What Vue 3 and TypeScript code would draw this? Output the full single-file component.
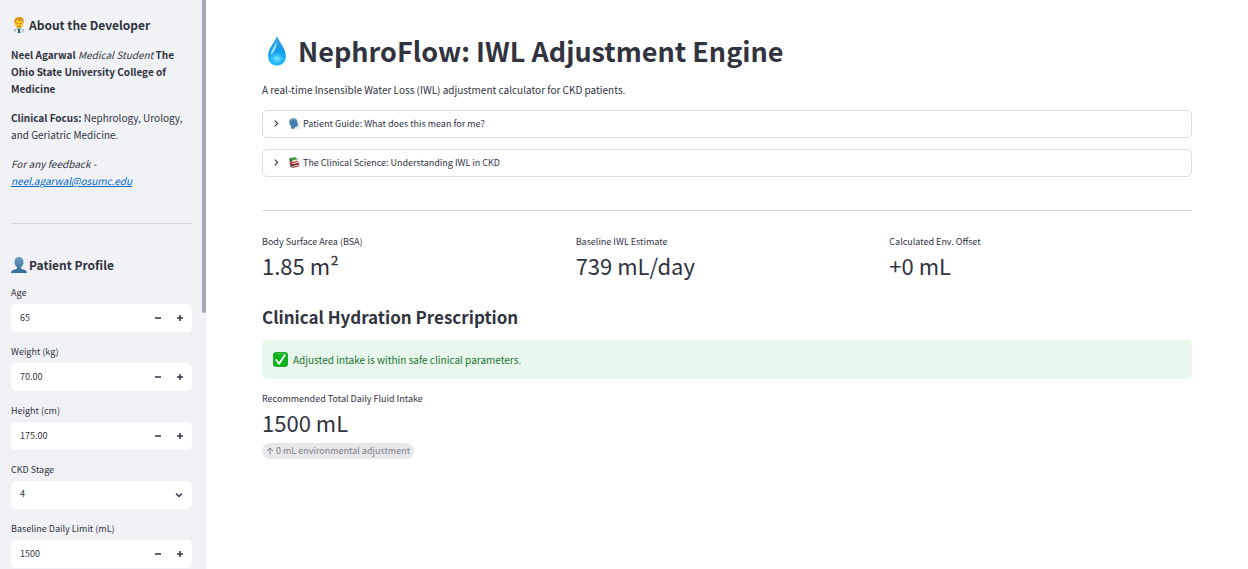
<script setup lang="ts">
import { reactive, ref } from 'vue'

interface NumberField {
  id: string
  label: string
  value: string
  step: number
  digits: number
}

interface Metric {
  label: string
  value: string
}

const profile = reactive<NumberField[]>([
  { id: 'age', label: 'Age', value: '65', step: 1, digits: 0 },
  { id: 'weight', label: 'Weight (kg)', value: '70.00', step: 0.5, digits: 2 },
  { id: 'height', label: 'Height (cm)', value: '175.00', step: 0.5, digits: 2 },
  { id: 'stage', label: 'CKD Stage', value: '4', step: 0, digits: 0 },
  { id: 'limit', label: 'Baseline Daily Limit (mL)', value: '1500', step: 50, digits: 0 },
])

const stages = ['1', '2', '3', '4', '5']

const metrics = ref<Metric[]>([
  { label: 'Body Surface Area (BSA)', value: '1.85 m²' },
  { label: 'Baseline IWL Estimate', value: '739 mL/day' },
  { label: 'Calculated Env. Offset', value: '+0 mL' },
])

function bump(field: NumberField, direction: number): void {
  const next = Number(field.value) + direction * field.step
  field.value = Math.max(0, next).toFixed(field.digits)
}
</script>

<template>
  <div class="app">
    <aside class="sidebar">
      <div class="sidebar-content">
        <h3 class="side-heading">
          <svg class="side-icon" viewBox="0 0 32 32" aria-hidden="true">
            <path d="M4 32c0-7 5-10 12-10s12 3 12 10z" fill="#e3e9ee" />
            <path d="M11 22l5 8 5-8-2-3h-6z" fill="#79b4cf" />
            <path d="M14.500 24h3l1 8h-5z" fill="#28536e" />
            <path d="M8 24v5M24 24v5" stroke="#66727b" stroke-width="1.500" />
            <ellipse cx="16" cy="13" rx="8.500" ry="10" fill="#fcc52b" />
            <path d="M7 14C5 4 9 0 17 0c7 0 10 5 8 14l-2-6c-5 0-8-1-10-3-1 3-4 3-6 9z" fill="#d5941d" />
            <circle cx="12.500" cy="12.500" r="1.200" fill="#67451c" />
            <circle cx="19.500" cy="12.500" r="1.200" fill="#67451c" />
            <path d="M12 18q4 3 8 0" fill="none" stroke="#a75724" stroke-width="1.500" />
          </svg>
          <span>About the Developer</span>
        </h3>
        <div class="about">
          <p><strong>Neel Agarwal</strong> <em>Medical Student</em> <strong>The Ohio State University College of Medicine</strong></p>
          <p><strong>Clinical Focus:</strong> Nephrology, Urology, and Geriatric Medicine.</p>
          <p><em>For any feedback - <a href="mailto:neel.agarwal@osumc.edu">neel.agarwal@osumc.edu</a></em></p>
        </div>
        <hr class="rule side-rule" />
        <h3 class="side-heading">
          <svg class="side-icon" viewBox="0 0 32 32" aria-hidden="true">
            <defs>
              <linearGradient id="bust" x1="0" y1="0" x2="0" y2="1">
                <stop offset="0" stop-color="#6b9cc0" />
                <stop offset="1" stop-color="#346b9a" />
              </linearGradient>
            </defs>
            <path d="M16 0c6 0 9 4 9 10 0 5-2 8-5 10v3c2 2 12 2 12 9H0c0-7 10-7 12-9v-3c-3-2-5-5-5-10 0-6 3-10 9-10z" fill="url(#bust)" />
          </svg>
          <span>Patient Profile</span>
        </h3>
        <form class="fields" @submit.prevent>
          <div v-for="field in profile" :key="field.id" class="field">
            <label :for="field.id">{{ field.label }}</label>
            <div class="control">
              <template v-if="field.id === 'stage'">
                <select :id="field.id" v-model="field.value">
                  <option v-for="s in stages" :key="s" :value="s">{{ s }}</option>
                </select>
                <svg class="chevron" viewBox="0 0 8 8" aria-hidden="true">
                  <path d="M1 2.500l3 3 3-3" />
                </svg>
              </template>
              <template v-else>
                <input :id="field.id" v-model="field.value" type="text" inputmode="decimal" />
                <button type="button" :aria-label="'Decrease ' + field.label" @click="bump(field, -1)">
                  <svg viewBox="0 0 8 8" aria-hidden="true"><path d="M1 4h6" /></svg>
                </button>
                <button type="button" :aria-label="'Increase ' + field.label" @click="bump(field, 1)">
                  <svg viewBox="0 0 8 8" aria-hidden="true"><path d="M1 4h6M4 1v6" /></svg>
                </button>
              </template>
            </div>
          </div>
        </form>
      </div>
      <div class="scroll-thumb"></div>
    </aside>

    <main class="main">
      <h1>
        <svg class="drop" viewBox="0 0 32 32" aria-hidden="true">
          <defs>
            <linearGradient id="water" x1="0" y1="0" x2="0" y2="1">
              <stop offset="0" stop-color="#3d9fdc" />
              <stop offset="0.500" stop-color="#159be9" />
              <stop offset="0.750" stop-color="#16b5f7" />
              <stop offset="1" stop-color="#25b9f4" />
            </linearGradient>
            <radialGradient id="glow" cx="0.500" cy="0.500" r="0.500">
              <stop offset="0" stop-color="#9cecff" stop-opacity="0.900" />
              <stop offset="1" stop-color="#4ccfff" stop-opacity="0" />
            </radialGradient>
          </defs>
          <path d="M16 0c1.500 5 9.500 13.500 9.500 21S21 31.500 16 31.500 6.500 28.500 6.500 21 14.500 5 16 0z" fill="url(#water)" />
          <ellipse cx="16" cy="24" rx="8" ry="6" fill="url(#glow)" />
          <path d="M15.500 5c.5 4-.5 8-2.500 11s-3 5-3.500 3c-.5-3 4.500-8 6-14z" fill="#bdeaff" opacity="0.850" />
        </svg>
        <span>NephroFlow: IWL Adjustment Engine</span>
      </h1>
      <p class="intro">A real-time Insensible Water Loss (IWL) adjustment calculator for CKD patients.</p>

      <div class="expanders">
        <button type="button" class="expander" aria-expanded="false">
          <svg class="caret" viewBox="0 0 8 8" aria-hidden="true"><path d="M2.500 1.500L5 4 2.500 6.500" /></svg>
          <svg class="emoji" viewBox="0 0 32 32" aria-hidden="true">
            <path d="M13 1c8 0 11 5 11 11l3 6c0 2-2 2-3 2 0 4 0 6-4 6h-3v5H6v-8c-4-3-5-6-5-11C1 5 6 1 13 1z" fill="#477daf" />
            <path d="M6 6c4-3 10-3 13 0" fill="none" stroke="#6e9fc6" stroke-width="3" />
            <path d="M24 23l6-2M24 26h7M23 29l5 2" stroke="#9ab7cd" stroke-width="2" />
            <path d="M27 9l3-2M28 13h4" stroke="#bacbd8" stroke-width="2" />
          </svg>
          <span>Patient Guide: What does this mean for me?</span>
        </button>
        <button type="button" class="expander" aria-expanded="false">
          <svg class="caret" viewBox="0 0 8 8" aria-hidden="true"><path d="M2.500 1.500L5 4 2.500 6.500" /></svg>
          <svg class="emoji" viewBox="0 0 32 32" aria-hidden="true">
            <path d="M3 20l20-3 8 6-21 5-7-4z" fill="#263e4b" />
            <path d="M10 26l19-5v4l-19 5z" fill="#dce1da" />
            <path d="M2 12l18-4 10 7-20 6-8-5z" fill="#d43732" />
            <path d="M10 18l19-5v4l-19 5z" fill="#f2d9c9" />
            <path d="M10 22l20-5v3l-20 5-8-5v-3z" fill="#a71e24" />
            <path d="M1 3l17-2 10 7-19 5-8-6z" fill="#429444" />
            <path d="M9 10l18-4v4L9 15z" fill="#e5e9da" />
            <path d="M1 5l8 7v4l-8-6z" fill="#285d2f" />
            <path d="M3 24l7 5 20-5v3l-20 5-7-5z" fill="#9c2828" />
          </svg>
          <span>The Clinical Science: Understanding IWL in CKD</span>
        </button>
      </div>

      <hr class="rule main-rule" />

      <section class="metrics" aria-label="Estimates">
        <div v-for="m in metrics" :key="m.label" class="metric">
          <div class="metric-label">{{ m.label }}</div>
          <div class="metric-value">{{ m.value }}</div>
        </div>
      </section>

      <h2>Clinical Hydration Prescription</h2>

      <div class="alert" role="status">
        <svg class="check" viewBox="0 0 32 32" aria-hidden="true">
          <rect x="1" y="1" width="30" height="30" rx="5" fill="#08b51b" stroke="#078c16" stroke-width="1.500" />
          <path d="M4 4h24" stroke="#55d55c" stroke-width="1.500" />
          <path d="M7 17l6 8L25 7" fill="none" stroke="#fff" stroke-width="4" stroke-linecap="round" stroke-linejoin="round" />
        </svg>
        <span>Adjusted intake is within safe clinical parameters.</span>
      </div>

      <section class="metric" aria-label="Recommendation">
        <div class="metric-label">Recommended Total Daily Fluid Intake</div>
        <div class="metric-value">1500 mL</div>
        <div class="delta">
          <svg viewBox="0 0 8 8" aria-hidden="true"><path d="M4 7.500V1M1 4l3-3 3 3" /></svg>
          <span>0 mL environmental adjustment</span>
        </div>
      </section>
    </main>
  </div>
</template>

<style>
body {
  margin: 0;
  background: #fff;
}
</style>

<style scoped>
.app {
  display: flex;
  height: 100vh;
  overflow: hidden;
  color: #31333f;
  font-family: "Noto Sans CJK SC", "Noto Sans", sans-serif;
  font-size: 10px;
  line-height: 17px;
}

h1,
h2,
h3,
p {
  margin: 0;
}

svg {
  flex: none;
}

.sidebar {
  position: relative;
  flex: 0 0 206px;
  overflow: hidden;
  background: #f0f2f6;
}

.sidebar-content {
  height: 100%;
  box-sizing: border-box;
  overflow-y: auto;
  scrollbar-width: none;
  padding: 16px 14px 0 11px;
}

.scroll-thumb {
  position: absolute;
  top: 0;
  right: 0;
  width: 4px;
  height: 55%;
  border-radius: 0 0 2px 2px;
  background: #a3a8b4;
}

.side-heading {
  display: flex;
  align-items: center;
  gap: 2px;
  font-size: 12px;
  line-height: 18px;
  font-weight: 600;
}

.side-icon {
  width: 16px;
  height: 16px;
}

.about {
  display: flex;
  flex-direction: column;
  gap: 12px;
  margin-top: 12px;
}

.about a {
  color: #0068c9;
}

.rule {
  height: 1px;
  border: 0;
  background: #d6d8de;
}

.side-rule {
  margin: 34px 0 32px;
}

.fields {
  display: flex;
  flex-direction: column;
  gap: 12px;
  margin-top: 11px;
}

.field {
  display: flex;
  flex-direction: column;
  gap: 4px;
}

.field label {
  font-size: 9px;
  line-height: 15px;
}

.control {
  position: relative;
  display: flex;
  height: 28px;
  overflow: hidden;
  border-radius: 5px;
  background: #fff;
}

.control input,
.control select {
  flex: 1;
  min-width: 0;
  padding: 0 9px 1px;
  border: 0;
  outline: 0;
  appearance: none;
  background: transparent;
  color: inherit;
  font: inherit;
  font-size: 9px;
}

.control select {
  padding-bottom: 3px;
}

.control button {
  display: flex;
  align-items: center;
  justify-content: center;
  width: 22px;
  padding: 0;
  border: 0;
  background: transparent;
  color: inherit;
}

.control button:last-child {
  margin-right: 1px;
}

.control svg {
  width: 8px;
  height: 8px;
  fill: none;
  stroke: currentColor;
  stroke-width: 1.5;
}

.control .chevron {
  position: absolute;
  top: 10px;
  right: 9px;
  pointer-events: none;
}

.main {
  flex: 1;
  min-width: 0;
  overflow-y: auto;
  scrollbar-width: none;
  padding: 31px 56px;
}

h1 {
  display: flex;
  align-items: center;
  gap: 6px;
  font-size: 27px;
  line-height: 40px;
  font-weight: 700;
}

.drop {
  width: 30px;
  height: 30px;
}

.intro {
  margin-top: 10px;
}

.expanders {
  display: flex;
  flex-direction: column;
  gap: 11px;
  margin-top: 12px;
}

.expander {
  display: flex;
  align-items: center;
  width: 100%;
  height: 28px;
  padding: 0 10px 1px 9px;
  border: 1px solid #dcdde0;
  border-radius: 5px;
  background: #fff;
  color: inherit;
  font: inherit;
  font-size: 9px;
  text-align: left;
}

.caret {
  width: 9px;
  height: 9px;
  margin-right: 8px;
  fill: none;
  stroke: currentColor;
}

.emoji {
  width: 11px;
  height: 11px;
  margin-right: 3px;
}

.main-rule {
  margin: 33px 0 23px;
}

.metrics {
  display: grid;
  grid-template-columns: repeat(3, 1fr);
  gap: 11px;
}

.metric-label {
  font-size: 9px;
  line-height: 15px;
}

.metric-value {
  padding-bottom: 4px;
  font-size: 22px;
  line-height: 32px;
}

h2 {
  margin-top: 18px;
  font-size: 17px;
  line-height: 28px;
  font-weight: 600;
}

.alert {
  display: flex;
  align-items: center;
  gap: 5px;
  margin: 9px 0 12px;
  padding: 11px;
  border-radius: 5px;
  background: #e9f8ed;
  color: #177233;
}

.check {
  width: 15px;
  height: 15px;
}

.delta {
  display: inline-flex;
  align-items: center;
  gap: 2px;
  padding: 0 4px;
  border-radius: 8px;
  background: #e8e8ea;
  color: #7c7d85;
  font-size: 9px;
  line-height: 16px;
}

.delta svg {
  width: 8px;
  height: 8px;
  fill: none;
  stroke: currentColor;
}
</style>
